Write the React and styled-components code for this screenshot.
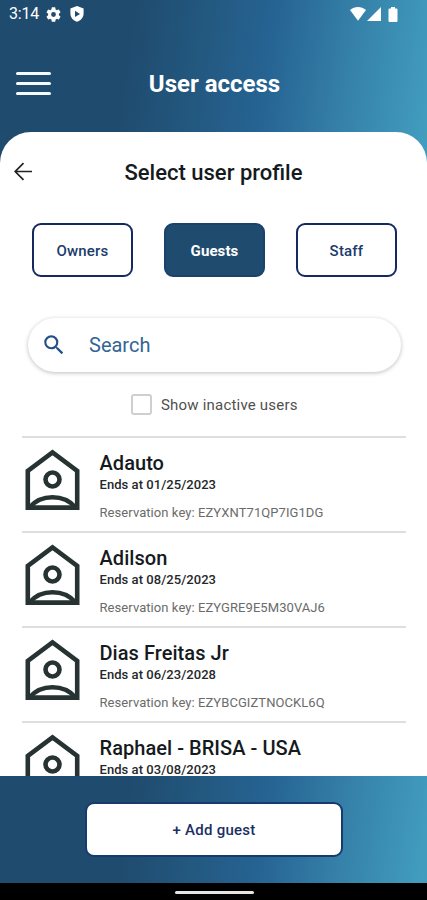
import React from "react";
import styled, { createGlobalStyle } from "styled-components";

const colors = {
    navy: "#1f4b6e",
    border: "#14295f",
    text: "#151a1e",
    line: "#dedede",
};

const gradient = `linear-gradient(98deg, #1f4b6e 0%, #1f4b6e 30%, #23587f 46%, #266494 62%, #3580a8 79%, #419cbe 98%)`;

const GlobalStyle = createGlobalStyle`
    * {
        box-sizing: border-box;
    }
    body {
        margin: 0;
        font-family: Roboto, "Liberation Sans", sans-serif;
        background: #fff;
    }
    button {
        font-family: inherit;
        padding: 0;
    }
`;

//#region Layout
const Screen = styled.div`
    display: flex;
    flex-direction: column;
    width: 427px;
    height: 900px;
    overflow: hidden;
    background: #fff;
`;

const Top = styled.div`
    flex: none;
    height: 168px;
    background: ${gradient};
`;

const StatusBar = styled.div`
    display: flex;
    align-items: center;
    height: 28px;
    padding: 0 29px 0 9px;
    color: #fff;
`;

const Clock = styled.span`
    width: 37px;
    font-size: 16px;
    line-height: 28px;
    letter-spacing: -0.2px;
    white-space: nowrap;
`;

const StatusIcon = styled.svg`
    display: block;
    flex: none;
    margin-left: ${({ $gap }) => $gap || 0}px;
    fill: #fff;
`;

const Spacer = styled.div`
    flex: 1;
`;

const Header = styled.header`
    display: grid;
    grid-template-columns: 34px 1fr 34px;
    align-items: center;
    height: 104px;
    padding: 6px 16px 0;
`;

const MenuButton = styled.button`
    display: flex;
    flex-direction: column;
    gap: 7px;
    width: 35px;
    border: 0;
    background: none;
`;

const MenuLine = styled.span`
    height: 3px;
    border-radius: 1.5px;
    background: #f6fafc;
`;

const HeaderTitle = styled.h1`
    margin: 0;
    padding: 1px 0 0 2px;
    color: #fff;
    font-size: 24px;
    font-weight: 700;
    line-height: 30px;
    text-align: center;
    white-space: nowrap;
`;

const Panel = styled.main`
    display: flex;
    flex: 1;
    flex-direction: column;
    min-height: 0;
    margin-top: -36px;
    overflow: hidden;
    border-radius: 31px 31px 0 0;
    background: #fff;
`;
//#endregion Layout

//#region Controls
const ProfileBar = styled.div`
    display: grid;
    flex: none;
    grid-template-columns: 24px 1fr 24px;
    align-items: center;
    height: 80px;
    padding: 0 11px;
`;

const ProfileTitle = styled.h2`
    margin: 0;
    padding-top: 1px;
    color: ${colors.text};
    font-size: 22px;
    font-weight: 500;
    line-height: 29px;
    text-align: center;
    white-space: nowrap;
`;

const Tabs = styled.div`
    display: flex;
    flex: none;
    gap: 31px;
    margin: 11px 0 0 32px;
`;

const Tab = styled.button`
    width: 101px;
    height: 54px;
    padding-top: 1px;
    border: 2px solid ${({ $active }) => ($active ? "#1b426b" : colors.border)};
    border-radius: 9px;
    background: ${({ $active }) => ($active ? colors.navy : "#fff")};
    color: ${({ $active }) => ($active ? "#fff" : "#203c6c")};
    font-size: 15px;
    font-weight: ${({ $active }) => ($active ? 700 : 500)};
    letter-spacing: ${({ $active }) => ($active ? 0.1 : 0.2)}px;
`;

const SearchBox = styled.label`
    display: flex;
    flex: none;
    align-items: center;
    gap: 22px;
    width: 373px;
    height: 54px;
    margin: 41px 0 0 28px;
    padding-left: 13px;
    border-radius: 27px;
    background: #fff;
    box-shadow: 0 1px 4px rgba(0, 0, 0, 0.26);
`;

const SearchInput = styled.input`
    flex: 1;
    min-width: 0;
    padding: 0;
    border: 0;
    outline: 0;
    background: none;
    font-family: inherit;
    font-size: 20px;
    &::placeholder {
        color: #326595;
        opacity: 1;
    }
`;

const InactiveToggle = styled.label`
    display: flex;
    flex: none;
    align-items: center;
    gap: 9px;
    height: 22px;
    margin: 21px 0 21px 131px;
    color: #505050;
    font-size: 15px;
    letter-spacing: 0.2px;
    line-height: 24px;
    white-space: nowrap;
`;

const CheckBox = styled.span`
    width: 21px;
    height: 21px;
    border: 2px solid #cfcfcf;
    border-radius: 3px;
`;

const ToggleText = styled.span`
    padding-top: 2px;
`;
//#endregion Controls

//#region Guests
const GuestList = styled.ul`
    flex: 1;
    min-height: 0;
    margin: 0 21px 0 22px;
    padding: 0;
    overflow: hidden;
    list-style: none;
`;

const GuestRow = styled.li`
    display: flex;
    height: 95px;
    padding: 11px 0 0 3px;
    border-top: 2px solid ${colors.line};
`;

const GuestInfo = styled.div`
    margin-left: 19.5px;
    padding-top: 1px;
    white-space: nowrap;
`;

const GuestName = styled.div`
    color: ${colors.text};
    font-size: 20px;
    font-weight: 500;
    letter-spacing: 0.05px;
    line-height: 26px;
`;

const GuestDate = styled.div`
    color: #25282a;
    font-size: 13px;
    font-weight: 500;
    letter-spacing: 0.05px;
    line-height: 17px;
`;

const GuestKey = styled.div`
    margin-top: 11px;
    color: #6b6b6b;
    font-size: 13px;
    letter-spacing: 0.07px;
    line-height: 17px;
`;
//#endregion Guests

//#region Bottom
const Footer = styled.footer`
    display: flex;
    flex: none;
    justify-content: center;
    height: 107px;
    padding: 26px 0 0 1px;
    background: ${gradient};
`;

const AddButton = styled.button`
    width: 258px;
    height: 55px;
    border: 2px solid #173b6d;
    border-radius: 9px;
    background: #fff;
    color: #1b2f63;
    font-size: 15px;
    font-weight: 500;
    letter-spacing: 0.25px;
`;

const NavBar = styled.div`
    display: flex;
    flex: none;
    justify-content: center;
    height: 17px;
    padding: 8px 0 0 2px;
    background: #000;
`;

const NavHandle = styled.div`
    width: 79px;
    height: 3px;
    border-radius: 2px;
    background: #e4e4e4;
`;
//#endregion Bottom

const HouseIcon = () => (
    <svg width="55" height="62" viewBox="0 0 55 62" fill="none">
        <g stroke="#273333" strokeWidth="4.6">
            <path d="M2.8 58.6V21.8L27.5 3.4l24.7 18.4v36.8z" />
            <circle cx="27.5" cy="30.5" r="7" />
            <path d="M4.5 58.4C16 44.8 39 44.8 50.5 58.4" />
        </g>
    </svg>
);

const guests = [
    { name: "Adauto", date: "01/25/2023", code: "EZYXNT71QP7IG1DG" },
    { name: "Adilson", date: "08/25/2023", code: "EZYGRE9E5M30VAJ6" },
    { name: "Dias Freitas Jr", date: "06/23/2028", code: "EZYBCGIZTNOCKL6Q" },
    { name: "Raphael - BRISA - USA", date: "03/08/2023", code: "" },
];

const App = () => (
    <Screen>
        <GlobalStyle />
        <Top>
            <StatusBar>
                <Clock>3:14</Clock>
                <StatusIcon width="15" height="15" viewBox="2 2 20 20">
                    <path d="M19.14 12.94c.04-.3.06-.61.06-.94s-.02-.64-.07-.94l2.03-1.58a.49.49 0 0 0 .12-.61l-1.92-3.32a.49.49 0 0 0-.59-.22l-2.39.96a7 7 0 0 0-1.62-.94l-.36-2.54a.48.48 0 0 0-.48-.41h-3.84a.48.48 0 0 0-.47.41l-.36 2.54a7.4 7.4 0 0 0-1.62.94l-2.39-.96a.48.48 0 0 0-.59.22L2.73 8.87a.48.48 0 0 0 .12.61l2.03 1.58a6 6 0 0 0 0 1.88l-2.03 1.58a.49.49 0 0 0-.12.61l1.92 3.32c.12.22.37.29.59.22l2.39-.96c.5.38 1.03.7 1.62.94l.36 2.54c.05.24.24.41.48.41h3.84c.24 0 .44-.17.47-.41l.36-2.54a7 7 0 0 0 1.62-.94l2.39.96c.22.08.47 0 .59-.22l1.92-3.32a.48.48 0 0 0-.12-.61zM12 15.2a3.2 3.2 0 1 1 0-6.4 3.2 3.2 0 0 1 0 6.4z" />
                </StatusIcon>
                <StatusIcon width="14" height="16" viewBox="0 0 14 16" $gap={9}>
                    <path
                        fillRule="evenodd"
                        d="M7 0l6.600 2.600v4.900c0 3.900-2.800 7.100-6.600 8.300C3.200 14.600.4 11.400.4 7.500V2.600zM5 4.700v6.400l5-3.200z"
                    />
                </StatusIcon>
                <Spacer />
                <StatusIcon width="16" height="14" viewBox="0 0 16 14">
                    <path d="M0 3C4.600-.9 11.400-.9 16 3L8 13.700z" />
                </StatusIcon>
                <StatusIcon width="14" height="14" viewBox="0 0 14 14" $gap={1}>
                    <path d="M14 0v14H0z" />
                </StatusIcon>
                <StatusIcon width="10" height="15" viewBox="0 0 10 15" $gap={7}>
                    <path d="M3 0h4v1.500h1.500q1 0 1 1V14q0 1-1 1h-7q-1 0-1-1V2.500q0-1 1-1H3z" />
                </StatusIcon>
            </StatusBar>
            <Header>
                <MenuButton aria-label="Menu">
                    <MenuLine />
                    <MenuLine />
                    <MenuLine />
                </MenuButton>
                <HeaderTitle>User access</HeaderTitle>
            </Header>
        </Top>
        <Panel>
            <ProfileBar>
                <svg width="24" height="24" viewBox="0 0 24 24" fill="none">
                    <path
                        d="M21 11.500H4M12.500 3.200l-8.300 8.300 8.300 8.300"
                        stroke="#222"
                        strokeWidth="1.700"
                    />
                </svg>
                <ProfileTitle>Select user profile</ProfileTitle>
            </ProfileBar>
            <Tabs>
                <Tab>Owners</Tab>
                <Tab $active>Guests</Tab>
                <Tab>Staff</Tab>
            </Tabs>
            <SearchBox>
                <svg width="26" height="26" viewBox="0 0 24 24" fill="#24508a">
                    <path d="M15.500 14h-.79l-.28-.27A6.471 6.471 0 0 0 16 9.500 6.500 6.500 0 1 0 9.500 16c1.610 0 3.090-.59 4.230-1.570l.27.28v.79l5 4.990L20.490 19l-4.990-5zm-6 0C7.010 14 5 11.990 5 9.500S7.010 5 9.500 5 14 7.010 14 9.500 11.990 14 9.500 14z" />
                </svg>
                <SearchInput placeholder="Search" />
            </SearchBox>
            <InactiveToggle>
                <CheckBox />
                <ToggleText>Show inactive users</ToggleText>
            </InactiveToggle>
            <GuestList>
                {guests.map((guest) => (
                    <GuestRow key={guest.name}>
                        <HouseIcon />
                        <GuestInfo>
                            <GuestName>{guest.name}</GuestName>
                            <GuestDate>Ends at {guest.date}</GuestDate>
                            {guest.code && (
                                <GuestKey>Reservation key: {guest.code}</GuestKey>
                            )}
                        </GuestInfo>
                    </GuestRow>
                ))}
            </GuestList>
        </Panel>
        <Footer>
            <AddButton>+ Add guest</AddButton>
        </Footer>
        <NavBar>
            <NavHandle />
        </NavBar>
    </Screen>
);

export default App;
